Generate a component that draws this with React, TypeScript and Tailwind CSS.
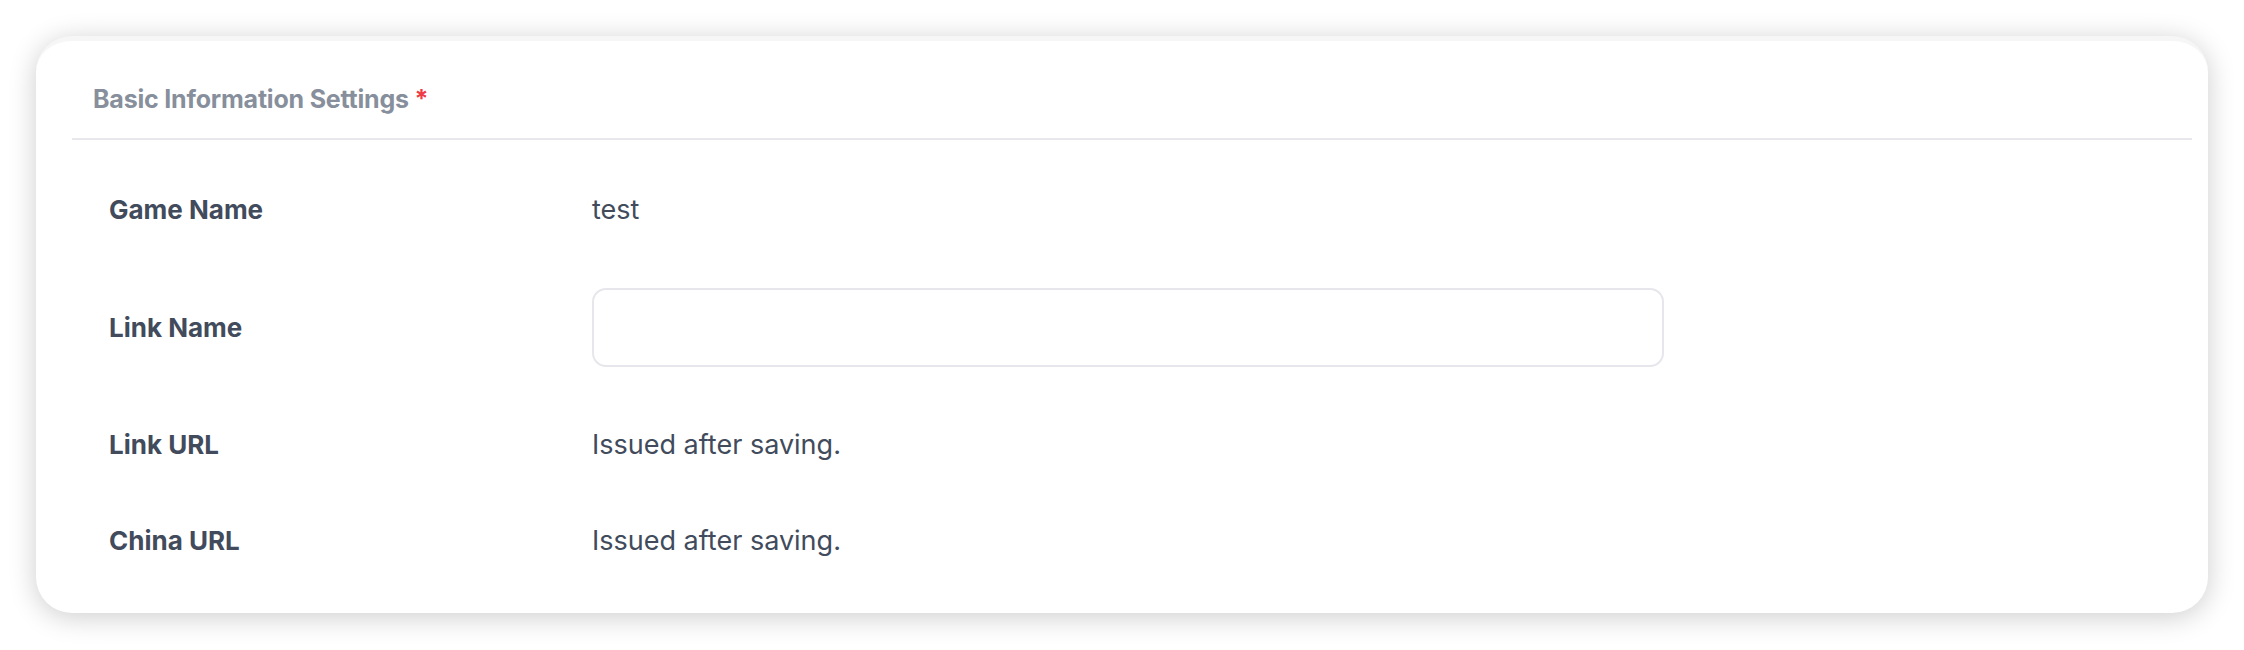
const rows: { label: string; value?: string; input?: boolean }[] = [
  { label: "Game Name", value: "test" },
  { label: "Link Name", input: true },
  { label: "Link URL", value: "Issued after saving." },
  { label: "China URL", value: "Issued after saving." },
];

export default function App() {
  return (
    <div className="min-h-[650px] w-[2244px] bg-white pl-[36px] pr-[36px] pt-[36px] font-['Inter',sans-serif]">
      <div className="flex h-[577px] flex-col rounded-[36px] border-t-[5px] border-[#f6f6f7] bg-white shadow-[0_4px_28px_rgba(0,0,0,0.2)]">
        <div className="flex h-[97px] items-center pl-[57px] pt-[20px]">
          <h2 className="text-[25px] font-bold tracking-[-0.2px] text-[#878f9c]">
            Basic Information Settings <span className="text-[#ef3b45]">*</span>
          </h2>
        </div>
        <div className="ml-[36px] mr-[16px] h-[2px] bg-[#e8e8ec]" />
        <div className="flex flex-col gap-[60px] pl-[73px] pt-[52px]">
          {rows.map((row) => (
            <div key={row.label} className="flex items-center">
              <div className="w-[483px] text-[26px] font-bold leading-[36px] text-[#414b5c]">{row.label}</div>
              {row.input ? (
                <input
                  type="text"
                  className="h-[79px] w-[1072px] rounded-[14px] border-2 border-[#e6e6ec] bg-white px-4 text-[27px] text-[#414b5c] outline-none"
                />
              ) : (
                <div className="h-[36px] text-[27px] leading-[36px] text-[#414b5c]">{row.value}</div>
              )}
            </div>
          ))}
        </div>
      </div>
    </div>
  );
}
